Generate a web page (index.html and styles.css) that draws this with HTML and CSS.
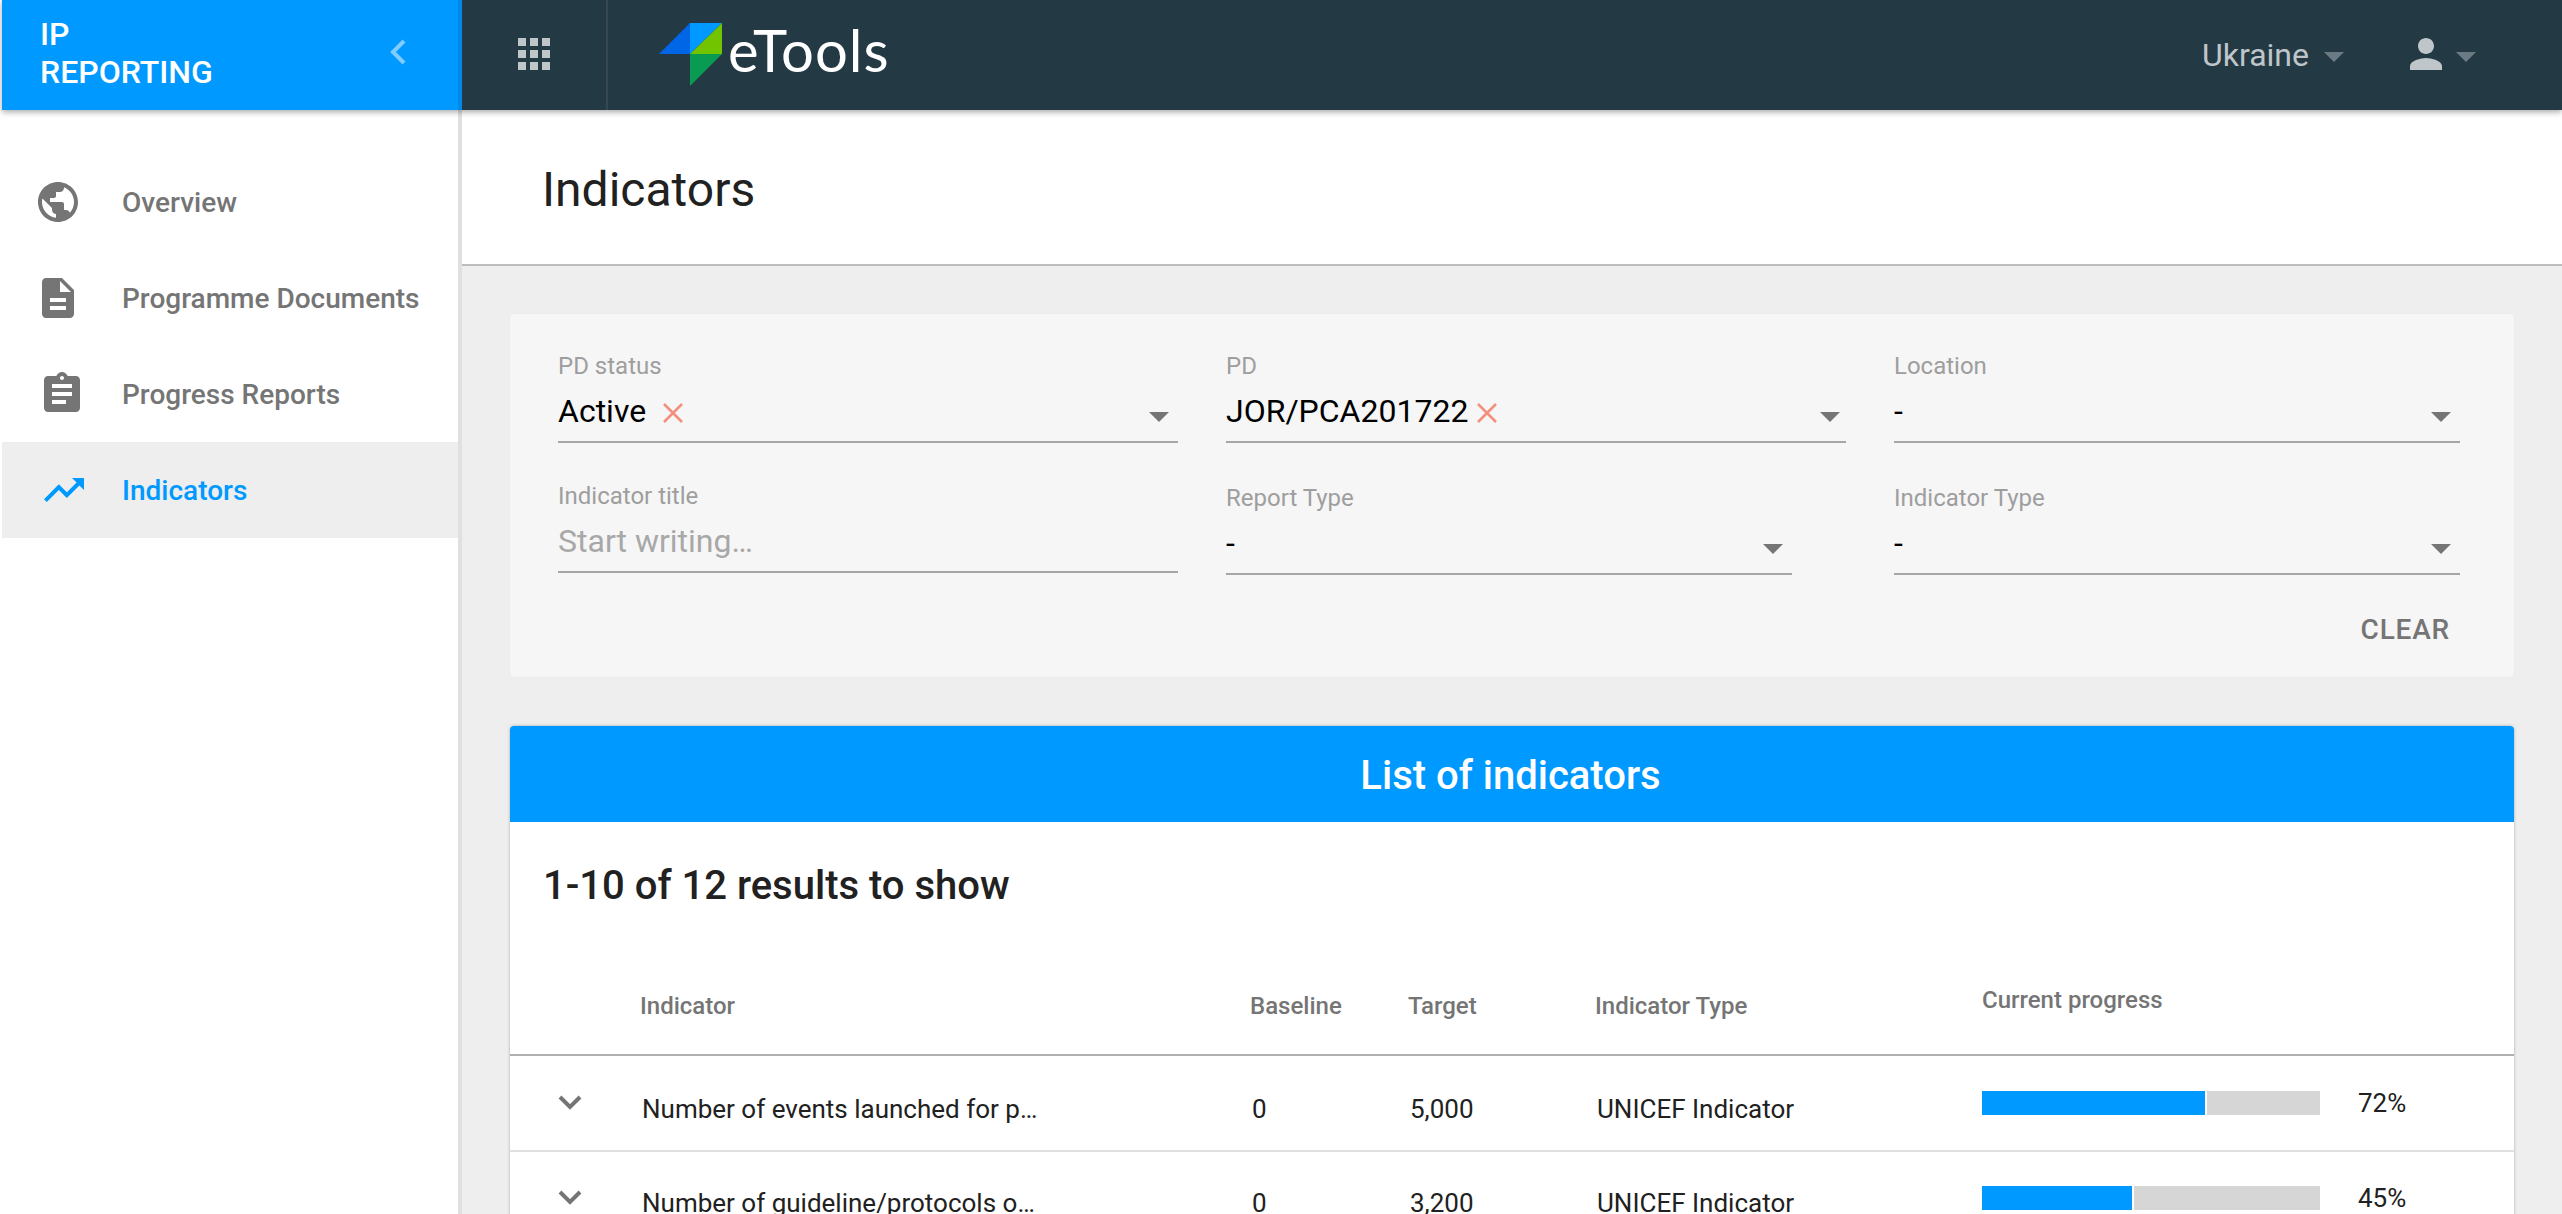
FILE: index.html
```html
<!DOCTYPE html>
<html lang="en">
<head>
    <meta charset="UTF-8">
    <title>Indicators</title>
    <link rel="stylesheet" href="styles.css">
</head>
<body>

<header class="topbar">
    <div class="brand">
        <div class="brand-name">IP<br>REPORTING</div>
        <svg class="brand-back" viewBox="0 0 16 26"><path d="M14 2 L3 13 L14 24" fill="none" stroke="#80ccff" stroke-width="4"/></svg>
    </div>
    <div class="apps">
        <div class="apps-grid">
            <span></span><span></span><span></span>
            <span></span><span></span><span></span>
            <span></span><span></span><span></span>
        </div>
    </div>
    <div class="logo">
        <svg class="logo-mark" viewBox="0 0 64 63">
            <polygon points="31,0 0,31 31,31" fill="#0066e6"/>
            <polygon points="31,0 63,0 31,31" fill="#0099ff"/>
            <polygon points="63,0 63,31 31,31" fill="#72c300"/>
            <polygon points="31,31 63,31 31,63" fill="#0a9b52"/>
        </svg>
        <span class="logo-text">eTools</span>
    </div>
    <div class="topbar-right">
        <span class="country">Ukraine</span>
        <span class="top-caret country-caret"></span>
        <svg class="person" viewBox="4 4 16 16"><path fill="#bfc6ca" d="M12 12c2.21 0 4-1.79 4-4s-1.79-4-4-4-4 1.79-4 4 1.79 4 4 4zm0 2c-2.67 0-8 1.34-8 4v2h16v-2c0-2.66-5.33-4-8-4z"/></svg>
        <span class="top-caret"></span>
    </div>
</header>

<div class="shell">
    <nav class="sidebar">
        <a class="nav-item">
            <svg class="nav-icon" viewBox="0 0 24 24"><path d="M12 2C6.48 2 2 6.48 2 12s4.48 10 10 10 10-4.48 10-10S17.52 2 12 2zm-1 17.93c-3.95-.49-7-3.85-7-7.93 0-.62.08-1.21.21-1.79L9 15v1c0 1.1.9 2 2 2v1.93zm6.9-2.54c-.26-.81-1-1.39-1.9-1.39h-1v-3c0-.55-.45-1-1-1H8v-2h2c.55 0 1-.45 1-1V7h2c1.1 0 2-.9 2-2v-.41c2.93 1.19 5 4.06 5 7.41 0 2.08-.8 3.97-2.1 5.39z"/></svg>
            Overview
        </a>
        <a class="nav-item">
            <svg class="nav-icon" viewBox="0 0 24 24"><path d="M14 2H6c-1.1 0-1.99.9-1.99 2L4 20c0 1.1.89 2 1.99 2H18c1.1 0 2-.9 2-2V8l-6-6zm2 16H8v-2h8v2zm0-4H8v-2h8v2zm-3-5V3.5L18.5 9H13z"/></svg>
            Programme Documents
        </a>
        <a class="nav-item">
            <svg class="nav-icon nav-icon-shift" viewBox="0 0 24 24"><path d="M19 3h-4.18C14.4 1.84 13.3 1 12 1c-1.3 0-2.4.84-2.82 2H5c-1.1 0-2 .9-2 2v14c0 1.1.9 2 2 2h14c1.1 0 2-.9 2-2V5c0-1.1-.9-2-2-2zm-7 0c.55 0 1 .45 1 1s-.45 1-1 1-1-.45-1-1 .45-1 1-1zm2 14H7v-2h7v2zm3-4H7v-2h10v2zm0-4H7V7h10v2z"/></svg>
            Progress Reports
        </a>
        <a class="nav-item active">
            <svg class="nav-icon nav-icon-shift2" viewBox="0 0 24 24"><path d="M16 6l2.29 2.29-4.88 4.88-4-4L2 16.59 3.41 18l6-6 4 4 6.3-6.29L22 12V6z"/></svg>
            Indicators
        </a>
    </nav>

    <main class="main">
        <div class="page-title"><h1>Indicators</h1></div>

        <div class="content">
            <section class="filters">
                <div class="filter-grid">
                    <div class="field">
                        <label>PD status</label>
                        <div class="control">
                            <span class="value">Active</span>
                            <svg class="clear-x" viewBox="0 0 22 20"><path d="M2 1 L20 19 M20 1 L2 19" stroke="#f48f7f" stroke-width="2.6" fill="none"/></svg>
                            <span class="caret"></span>
                        </div>
                    </div>
                    <div class="field">
                        <label>PD</label>
                        <div class="control">
                            <span class="value">JOR/PCA201722</span>
                            <svg class="clear-x clear-x-tight" viewBox="0 0 22 20"><path d="M2 1 L20 19 M20 1 L2 19" stroke="#f48f7f" stroke-width="2.6" fill="none"/></svg>
                            <span class="caret caret-wide"></span>
                        </div>
                    </div>
                    <div class="field">
                        <label>Location</label>
                        <div class="control">
                            <span class="value">-</span>
                            <span class="caret"></span>
                        </div>
                    </div>
                    <div class="field">
                        <label>Indicator title</label>
                        <div class="control">
                            <span class="value placeholder">Start writing…</span>
                        </div>
                    </div>
                    <div class="field field-low field-short">
                        <label>Report Type</label>
                        <div class="control">
                            <span class="value">-</span>
                            <span class="caret"></span>
                        </div>
                    </div>
                    <div class="field field-low">
                        <label>Indicator Type</label>
                        <div class="control">
                            <span class="value">-</span>
                            <span class="caret"></span>
                        </div>
                    </div>
                </div>
                <div class="filter-actions"><button class="btn-clear">CLEAR</button></div>
            </section>

            <section class="list">
                <div class="list-head">List of indicators</div>
                <h2 class="list-count">1-10 of 12 results to show</h2>
                <div class="row row-head">
                    <div></div>
                    <div class="low">Indicator</div>
                    <div class="low">Baseline</div>
                    <div class="low">Target</div>
                    <div class="low">Indicator Type</div>
                    <div>Current progress</div>
                </div>
                <div class="row">
                    <svg class="chevron" viewBox="0 0 24 16"><path d="M2 2 L12 12 L22 2" fill="none" stroke="#757575" stroke-width="4"/></svg>
                    <div class="low cell">Number of events launched for p…</div>
                    <div class="low cell">0</div>
                    <div class="low cell">5,000</div>
                    <div class="low cell">UNICEF Indicator</div>
                    <div class="progress">
                        <div class="bar"><div class="bar-fill" style="width: 66.6%"></div></div>
                        <span class="percent">72%</span>
                    </div>
                </div>
                <div class="row row-second">
                    <svg class="chevron" viewBox="0 0 24 16"><path d="M2 2 L12 12 L22 2" fill="none" stroke="#757575" stroke-width="4"/></svg>
                    <div class="low cell">Number of guideline/protocols o…</div>
                    <div class="low cell">0</div>
                    <div class="low cell">3,200</div>
                    <div class="low cell">UNICEF Indicator</div>
                    <div class="progress">
                        <div class="bar"><div class="bar-fill" style="width: 45%"></div></div>
                        <span class="percent">45%</span>
                    </div>
                </div>
            </section>
        </div>
    </main>
</div>

</body>
</html>
```

FILE: styles.css
```css
* {
    box-sizing: border-box;
}
html, body {
    height: 100%;
}
body {
    margin: 0;
    height: 1214px;
    overflow: hidden;
    background-color: white;
    font-family: Roboto, sans-serif;
    color: #212121;
}

/* top bar */
.topbar {
    display: flex;
    align-items: stretch;
    height: 110px;
    margin-left: 2px;
    background-color: #233944;
    box-shadow: 0 2px 6px rgba(0, 0, 0, 0.35);
    position: relative;
    z-index: 2;
}
.brand {
    width: 460px;
    display: flex;
    align-items: center;
    justify-content: space-between;
    padding: 0 52px 0 38px;
    background-color: #0099ff;
    border-right: 4px solid #0288e8;
    color: white;
}
.brand-name {
    font-size: 32px;
    font-weight: 500;
    line-height: 38px;
    margin-top: -4px;
}
.brand-back {
    width: 16px;
    height: 26px;
    margin-top: -6px;
}
.apps {
    width: 146px;
    border-right: 2px solid #37474f;
    display: flex;
    align-items: center;
    padding-left: 56px;
}
.apps-grid {
    display: grid;
    grid-template-columns: repeat(3, 8px);
    grid-auto-rows: 8px;
    gap: 4px;
    margin-top: -2px;
}
.apps-grid span {
    background-color: #bfc6ca;
}
.logo {
    display: flex;
    align-items: center;
    padding-left: 51px;
}
.logo-mark {
    width: 64px;
    height: 63px;
    margin-top: -1px;
}
.logo-text {
    font-family: Lato, sans-serif;
    font-weight: 400;
    font-size: 58px;
    letter-spacing: 1px;
    color: white;
    margin-left: 5px;
    margin-top: -12px;
}
.topbar-right {
    margin-left: auto;
    display: flex;
    align-items: center;
    padding-right: 86px;
}
.country {
    font-size: 32px;
    font-weight: 400;
    color: #bfc6ca;
}
.top-caret {
    width: 0;
    height: 0;
    border-left: 10px solid transparent;
    border-right: 10px solid transparent;
    border-top: 10px solid #6b7b83;
    margin-left: 14px;
    margin-top: 4px;
}
.country-caret {
    margin-left: 15px;
}
.person {
    width: 32px;
    height: 32px;
    margin-left: 66px;
    margin-top: -2px;
}

/* layout */
.shell {
    display: flex;
    height: 1104px;
    margin-left: 2px;
}
.sidebar {
    width: 460px;
    flex: none;
    padding-top: 44px;
    border-right: 4px solid #e0e0e0;
}
.nav-item {
    display: flex;
    align-items: center;
    height: 96px;
    padding-left: 32px;
    font-size: 28px;
    font-weight: 500;
    color: #757575;
}
.nav-item.active {
    background-color: #eeeeee;
    color: #0099ff;
}
.nav-icon {
    width: 48px;
    height: 48px;
    margin-right: 40px;
    fill: #757575;
}
.nav-icon-shift {
    margin-left: 4px;
    margin-right: 36px;
}
.nav-icon-shift2 {
    margin-left: 6px;
    margin-right: 34px;
}
.active .nav-icon {
    fill: #0099ff;
}
.main {
    flex: 1;
    background-color: #eeeeee;
    min-width: 0;
}
.page-title {
    height: 156px;
    padding: 4px 0 0 80px;
    display: flex;
    align-items: center;
    background-color: white;
    border-bottom: 2px solid #bdbdbd;
}
.page-title h1 {
    margin: 0;
    font-size: 48px;
    font-weight: 400;
}
.content {
    padding: 48px;
}

/* filters */
.filters {
    height: 363px;
    margin-bottom: 49px;
    padding: 38px 54px 0 48px;
    background-color: #f6f6f6;
    border-radius: 4px;
    box-shadow: 0 0 2px rgba(0, 0, 0, 0.06);
}
.filter-grid {
    display: grid;
    grid-template-columns: 620px 620px 566px;
    column-gap: 48px;
    row-gap: 39px;
}
.field label {
    display: block;
    height: 28px;
    line-height: 28px;
    font-size: 24px;
    color: #9e9e9e;
}
.field-low {
    margin-top: 2px;
}
.field-short {
    width: 566px;
}
.control {
    display: flex;
    align-items: flex-start;
    height: 63px;
    padding-top: 11px;
    border-bottom: 2px solid #a6a6a6;
}
.value {
    font-size: 32px;
    line-height: 40px;
    color: black;
}
.placeholder {
    color: #a8a8a8;
}
.clear-x {
    width: 22px;
    height: 20px;
    margin: 12px 0 0 16px;
}
.clear-x-tight {
    margin-left: 8px;
}
.caret {
    width: 0;
    height: 0;
    margin: 21px 9px 0 auto;
    border-left: 10px solid transparent;
    border-right: 10px solid transparent;
    border-top: 10px solid #757575;
}
.caret-wide {
    margin-right: 6px;
}
.filter-actions {
    display: flex;
    justify-content: flex-end;
    margin-top: 37px;
}
.btn-clear {
    padding: 0 10px 0 0;
    border: none;
    background: none;
    font-family: Roboto, sans-serif;
    font-size: 28px;
    font-weight: 500;
    line-height: 36px;
    letter-spacing: 0.8px;
    color: #757575;
}

/* indicator list */
.list {
    background-color: white;
    border-radius: 4px 4px 0 0;
    box-shadow: 0 0 3px rgba(0, 0, 0, 0.3);
}
.list-head {
    height: 96px;
    padding: 2px 3px 0 0;
    line-height: 96px;
    text-align: center;
    background-color: #0099ff;
    border-radius: 4px 4px 0 0;
    color: white;
    font-size: 40px;
    font-weight: 500;
}
.list-count {
    margin: 0;
    height: 124px;
    padding: 2px 0 0 33px;
    line-height: 124px;
    font-size: 40px;
    font-weight: 500;
}
.row {
    display: grid;
    grid-template-columns: 130px 610px 158px 187px 387px 1fr;
    align-items: center;
    height: 96px;
    border-bottom: 2px solid #e0e0e0;
    font-size: 26px;
}
.row-second {
    height: 94px;
}
.row-second .low {
    padding-top: 10px;
}
.row-head {
    height: 110px;
    border-bottom: 2px solid #b0b0b0;
    font-size: 24px;
    font-weight: 500;
    color: #757575;
}
.low {
    padding-top: 12px;
}
.cell {
    padding-left: 2px;
}
.chevron {
    width: 24px;
    height: 16px;
    margin-left: 48px;
}
.progress {
    display: flex;
    align-items: center;
}
.bar {
    width: 338px;
    height: 24px;
    background-color: #d6d6d6;
}
.bar-fill {
    height: 100%;
    background-color: #0099ff;
    border-right: 2px solid white;
}
.percent {
    margin-left: 38px;
}
```
